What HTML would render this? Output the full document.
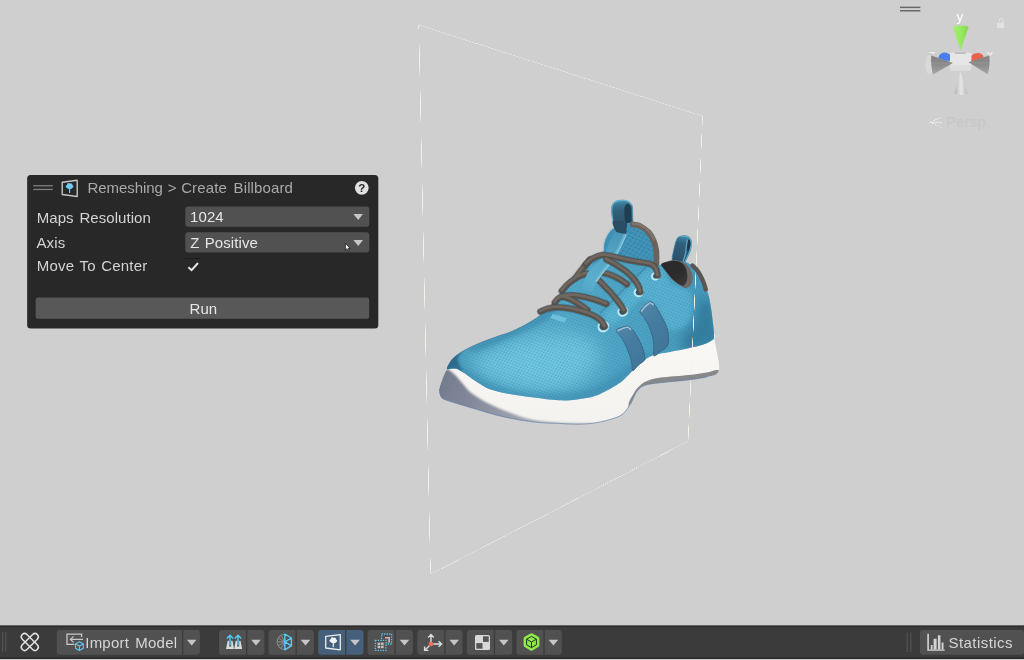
<!DOCTYPE html>
<html><head><meta charset="utf-8">
<style>
html,body{margin:0;padding:0;}
body{width:1024px;height:660px;overflow:hidden;background:#cfcfcf;font-family:"Liberation Sans",sans-serif;position:relative;}
#scene{position:absolute;left:0;top:0;width:1024px;height:660px;will-change:transform;}
#ui{position:absolute;left:0;top:0;width:1024px;height:660px;}
.t{position:absolute;font-size:15px;line-height:18px;white-space:nowrap;word-spacing:2px;letter-spacing:0.1px;}
#panel{position:absolute;left:27.1px;top:175.1px;width:351.2px;height:153.5px;background:#282828;border-radius:3.5px;}
.dd{position:absolute;left:185.2px;width:184.2px;height:20px;background:#515151;border-radius:3px;}
#run{position:absolute;left:35.6px;top:297.5px;width:333.6px;height:21.3px;background:#585858;border-radius:2.5px;}
#bar{position:absolute;left:0;top:625.6px;width:1024px;height:33.2px;background:#3b3b3b;border-top:1px solid #242424;border-bottom:1.1px solid #1c1c1c;box-sizing:border-box;}
</style></head><body>
<svg id="scene" width="1024" height="660" viewBox="0 0 1024 660">
<defs>
<linearGradient id="gUpper" gradientUnits="userSpaceOnUse" x1="450" y1="0" x2="715" y2="0">
<stop offset="0" stop-color="#4a9dbd"/><stop offset=".3" stop-color="#56accb"/><stop offset=".65" stop-color="#50a6c6"/><stop offset="1" stop-color="#4698ba"/></linearGradient>
<linearGradient id="gSole" gradientUnits="userSpaceOnUse" x1="0" y1="340" x2="0" y2="425">
<stop offset="0" stop-color="#faf8f5"/><stop offset="1" stop-color="#f4f2ee"/></linearGradient>
<linearGradient id="gWedge" gradientUnits="userSpaceOnUse" x1="440" y1="380" x2="560" y2="425"><stop offset="0" stop-color="#747b8d"/><stop offset=".3" stop-color="#848a9b"/><stop offset=".62" stop-color="#999eab"/><stop offset="1" stop-color="#b6b9c0"/></linearGradient>
<linearGradient id="gLoop" gradientUnits="userSpaceOnUse" x1="684" y1="235" x2="678" y2="262">
<stop offset="0" stop-color="#4c9bbd"/><stop offset=".14" stop-color="#3a7897"/><stop offset=".35" stop-color="#315e7a"/><stop offset="1" stop-color="#2b5068"/></linearGradient>
<linearGradient id="gLoop2" gradientUnits="userSpaceOnUse" x1="618" y1="200" x2="622" y2="236">
<stop offset="0" stop-color="#4b9abb"/><stop offset=".12" stop-color="#3b7896"/><stop offset=".3" stop-color="#325f7a"/><stop offset="1" stop-color="#294b62"/></linearGradient>
<linearGradient id="gOpen" gradientUnits="userSpaceOnUse" x1="662" y1="262" x2="688" y2="284"><stop offset="0" stop-color="#2a2a2a"/><stop offset=".6" stop-color="#2c2c2c"/><stop offset="1" stop-color="#3c3a39"/></linearGradient>
<linearGradient id="gRib" gradientUnits="userSpaceOnUse" x1="622" y1="232" x2="586" y2="292"><stop offset="0" stop-color="#4896b8"/><stop offset=".5" stop-color="#55a7c7"/><stop offset=".85" stop-color="#5aaecd"/><stop offset="1" stop-color="#5aaecd" stop-opacity="0.3"/></linearGradient>
<linearGradient id="gStripe" gradientUnits="userSpaceOnUse" x1="615" y1="310" x2="660" y2="360">
<stop offset="0" stop-color="#5f8fb0"/><stop offset=".5" stop-color="#457c9f"/><stop offset="1" stop-color="#3f7698"/></linearGradient>
<pattern id="mesh" width="4.4" height="3.6" patternUnits="userSpaceOnUse" patternTransform="rotate(-18)">
<circle cx="1.1" cy="0.9" r="0.9" fill="#2f7da3"/><circle cx="3.3" cy="2.7" r="0.9" fill="#2f7da3"/></pattern>
<pattern id="perf" width="6.2" height="5" patternUnits="userSpaceOnUse" patternTransform="rotate(-14)"><ellipse cx="1.6" cy="1.3" rx="1.5" ry="1.1" fill="#2f7598"/><ellipse cx="4.7" cy="3.8" rx="1.5" ry="1.1" fill="#2f7598"/></pattern>
<filter id="b05" x="-20%" y="-20%" width="140%" height="140%"><feGaussianBlur stdDeviation="0.6"/></filter>
<filter id="b1" x="-20%" y="-20%" width="140%" height="140%"><feGaussianBlur stdDeviation="0.8"/></filter>
<filter id="b2" x="-20%" y="-20%" width="140%" height="140%"><feGaussianBlur stdDeviation="1.2"/></filter>
<filter id="b3" x="-20%" y="-20%" width="140%" height="140%"><feGaussianBlur stdDeviation="2.2"/></filter>
<filter id="b4" x="-20%" y="-20%" width="140%" height="140%"><feGaussianBlur stdDeviation="3"/></filter>
<filter id="b6" x="-30%" y="-30%" width="160%" height="160%"><feGaussianBlur stdDeviation="5"/></filter>
<filter id="b8" x="-30%" y="-30%" width="160%" height="160%"><feGaussianBlur stdDeviation="9"/></filter>
<clipPath id="cUpper"><path d="M447.3 369.0C446.6 368.3 447.7 366.4 448.8 364.5C449.9 362.6 451.3 359.9 454.0 357.5C456.7 355.1 460.7 352.4 465.0 350.0C469.3 347.6 474.7 345.1 480.0 342.9C485.3 340.7 491.8 338.5 497.0 336.6C502.2 334.8 506.3 333.7 511.0 331.8C515.7 329.9 520.5 327.5 525.0 325.0C529.5 322.5 534.5 319.5 538.0 317.0C541.5 314.5 543.2 312.7 546.0 310.0C548.8 307.3 552.3 304.2 555.0 301.0C557.7 297.8 558.7 294.8 562.0 291.0C565.3 287.2 571.2 282.7 575.0 278.5C578.8 274.3 582.0 269.3 584.5 266.0C587.0 262.7 587.9 260.4 590.0 258.6C592.1 256.8 594.8 256.1 597.0 255.0C599.2 253.9 602.2 254.1 603.4 252.3C604.6 250.5 603.6 246.7 604.3 244.0C604.9 241.3 605.8 238.6 607.3 236.0C608.8 233.4 611.0 230.3 613.5 228.5C616.0 226.7 618.9 226.0 622.0 225.0C625.1 224.0 629.0 222.7 632.0 222.6C635.0 222.5 637.0 223.0 640.0 224.3C643.0 225.6 647.4 227.9 650.0 230.5C652.6 233.1 654.5 236.8 655.8 240.0C657.1 243.2 657.5 246.2 658.0 250.0C658.5 253.8 658.1 260.2 658.6 262.7C659.1 265.2 659.6 264.9 661.0 264.8C662.4 264.7 664.9 262.7 667.0 262.0C669.1 261.3 671.2 260.6 673.7 260.5C676.2 260.4 679.4 261.2 681.8 261.6C684.2 262.0 685.7 261.9 688.0 263.0C690.3 264.1 693.2 265.8 695.5 268.0C697.8 270.2 699.8 273.2 701.5 276.5C703.2 279.8 704.8 284.1 706.0 287.5C707.2 290.9 708.1 293.2 709.0 297.0C709.9 300.8 710.6 305.5 711.3 310.0C712.0 314.5 712.5 319.7 713.0 324.0C713.5 328.3 714.1 333.3 714.0 336.0C713.9 338.7 714.3 338.6 712.5 340.0C710.7 341.4 707.3 343.2 703.3 344.6C699.3 346.0 693.9 347.1 688.4 348.3C682.9 349.5 675.6 350.9 670.0 352.0C664.4 353.1 659.3 353.4 655.0 354.8C650.7 356.2 647.7 357.8 644.0 360.4C640.3 363.0 636.2 367.4 632.8 370.6C629.4 373.9 626.6 377.3 623.5 379.9C620.4 382.5 618.8 383.8 614.2 386.4C609.6 389.0 601.9 393.5 595.7 395.7C589.5 397.9 583.2 398.6 577.0 399.4C570.8 400.2 565.8 400.6 558.6 400.3C551.4 400.0 542.4 398.7 534.0 397.6C525.6 396.5 515.7 395.2 508.2 393.8C500.7 392.4 494.1 390.7 489.1 388.9C484.2 387.1 482.0 385.3 478.5 383.1C475.0 380.9 471.2 377.9 467.9 375.7C464.5 373.4 460.9 370.8 458.4 369.6C455.9 368.4 454.9 368.7 453.0 368.6C451.1 368.5 448.0 369.7 447.3 369.0Z"/></clipPath>
<clipPath id="cSole"><path d="M446.5 370.2C444.4 373.4 443.5 376.3 442.3 379.4C441.1 382.5 439.7 386.3 439.4 388.9C439.1 391.5 439.6 393.3 440.3 395.0C441.0 396.7 441.0 397.7 443.5 399.0C446.0 400.3 449.7 401.2 455.2 402.9C460.7 404.6 469.3 407.2 476.4 409.3C483.5 411.4 490.5 413.6 497.6 415.4C504.7 417.1 511.7 418.6 518.8 419.8C525.9 421.0 533.4 422.0 540.0 422.6C546.6 423.2 552.4 423.1 558.6 423.4C564.8 423.7 570.8 424.3 577.0 424.2C583.2 424.1 589.5 423.8 595.7 422.8C601.9 421.8 609.6 419.8 614.2 418.2C618.8 416.6 620.7 415.8 623.5 413.3C626.3 410.8 628.8 406.6 631.0 403.0C633.2 399.4 634.3 394.9 636.5 392.0C638.7 389.1 640.0 387.1 644.0 385.5C648.0 383.9 653.2 383.6 660.6 382.7C668.0 381.8 680.7 380.8 688.4 379.9C696.1 378.9 702.4 377.9 707.0 377.0C711.6 376.1 714.3 375.8 716.3 374.3C718.3 372.8 719.0 371.1 719.2 367.8C719.4 364.6 718.2 359.4 717.4 354.8C716.6 350.2 715.2 343.5 714.6 340.0C714.0 336.5 716.2 335.7 713.8 334.0C711.4 332.3 712.3 327.3 700.0 330.0C687.7 332.7 656.7 343.3 640.0 350.0C623.3 356.7 616.7 364.2 600.0 370.0C583.3 375.8 560.0 385.0 540.0 385.0C520.0 385.0 494.2 374.2 480.0 370.0C465.8 365.8 460.6 360.0 455.0 360.0C449.4 360.0 448.6 367.0 446.5 370.2Z"/></clipPath>
</defs>
<g id="shoe">
<path d="M672.3 260.5C671.6 258.6 672.9 254.0 673.6 250.5C674.4 247.0 675.6 241.7 676.8 239.3C677.9 236.9 679.1 236.9 680.5 236.3C681.9 235.7 683.5 235.5 685.0 235.7C686.5 235.9 688.4 236.4 689.5 237.5C690.6 238.6 691.2 240.2 691.4 242.3C691.6 244.4 691.3 247.2 690.5 250.0C689.7 252.8 687.6 256.8 686.5 259.0C685.4 261.2 685.4 262.5 684.0 263.0C682.6 263.5 680.0 262.4 678.0 262.0C676.0 261.6 673.0 262.4 672.3 260.5Z" fill="url(#gLoop)" stroke="#3f85a6" stroke-width="0.8"/>
<path d="M686.6 251.0C686.2 250.1 686.5 246.7 686.6 245.0C686.7 243.3 686.8 241.9 687.2 241.0C687.6 240.1 688.3 239.4 688.8 239.4C689.3 239.4 690.1 240.0 690.4 241.0C690.7 242.0 690.7 243.9 690.4 245.5C690.1 247.1 689.4 249.6 688.8 250.5C688.2 251.4 687.0 251.9 686.6 251.0Z" fill="#1d3a4c"/>
<path d="M687.4 239.6C687.2 240.7 686.7 243.9 686.4 246.0C686.1 248.1 686.1 250.1 685.8 252.0C685.5 253.9 684.9 255.9 684.4 257.5C683.9 259.1 683.2 260.9 683.0 261.6" fill="none" stroke="#62b6d6" stroke-width="1.2" opacity=".9"/>
<path d="M684.5 262.0C685.2 260.7 687.4 256.7 688.5 254.0C689.6 251.3 690.6 248.2 691.0 246.0C691.4 243.8 691.3 242.1 690.6 240.5C689.9 238.9 688.6 237.3 687.0 236.6C685.4 235.9 682.0 236.3 681.0 236.2" fill="none" stroke="#6cc0de" stroke-width="1" opacity=".8"/>
<path d="M446.5 370.2C444.4 373.4 443.5 376.3 442.3 379.4C441.1 382.5 439.7 386.3 439.4 388.9C439.1 391.5 439.6 393.3 440.3 395.0C441.0 396.7 441.0 397.7 443.5 399.0C446.0 400.3 449.7 401.2 455.2 402.9C460.7 404.6 469.3 407.2 476.4 409.3C483.5 411.4 490.5 413.6 497.6 415.4C504.7 417.1 511.7 418.6 518.8 419.8C525.9 421.0 533.4 422.0 540.0 422.6C546.6 423.2 552.4 423.1 558.6 423.4C564.8 423.7 570.8 424.3 577.0 424.2C583.2 424.1 589.5 423.8 595.7 422.8C601.9 421.8 609.6 419.8 614.2 418.2C618.8 416.6 620.7 415.8 623.5 413.3C626.3 410.8 628.8 406.6 631.0 403.0C633.2 399.4 634.3 394.9 636.5 392.0C638.7 389.1 640.0 387.1 644.0 385.5C648.0 383.9 653.2 383.6 660.6 382.7C668.0 381.8 680.7 380.8 688.4 379.9C696.1 378.9 702.4 377.9 707.0 377.0C711.6 376.1 714.3 375.8 716.3 374.3C718.3 372.8 719.0 371.1 719.2 367.8C719.4 364.6 718.2 359.4 717.4 354.8C716.6 350.2 715.2 343.5 714.6 340.0C714.0 336.5 716.2 335.7 713.8 334.0C711.4 332.3 712.3 327.3 700.0 330.0C687.7 332.7 656.7 343.3 640.0 350.0C623.3 356.7 616.7 364.2 600.0 370.0C583.3 375.8 560.0 385.0 540.0 385.0C520.0 385.0 494.2 374.2 480.0 370.0C465.8 365.8 460.6 360.0 455.0 360.0C449.4 360.0 448.6 367.0 446.5 370.2Z" fill="url(#gSole)"/>
<g clip-path="url(#cSole)">
<path d="M447.0 369.0C448.6 369.4 448.1 369.2 449.5 370.2C450.9 371.2 453.0 372.9 455.2 375.1C457.4 377.3 460.3 381.0 462.6 383.6C464.9 386.2 466.2 388.5 469.0 391.0C471.8 393.5 476.2 396.4 479.6 398.5C483.0 400.6 485.2 401.9 489.1 403.8C493.0 405.7 497.9 408.1 502.9 410.1C507.8 412.1 513.6 414.4 518.8 416.0C524.0 417.6 527.5 418.8 534.0 419.9C540.5 421.0 549.0 421.9 558.0 422.5C567.0 423.1 581.0 423.0 588.0 423.6C595.0 424.2 608.0 425.3 600.0 426.0C592.0 426.7 556.7 428.7 540.0 428.0C523.3 427.3 514.2 425.3 500.0 422.0C485.8 418.7 466.0 411.7 455.0 408.0C444.0 404.3 437.5 403.8 434.0 400.0C430.5 396.2 433.0 390.3 434.0 385.0C435.0 379.7 437.8 370.7 440.0 368.0C442.2 365.3 445.4 368.6 447.0 369.0Z" fill="url(#gWedge)" filter="url(#b1)"/>
<path d="M628.5 405.0C628.5 401.2 632.2 396.2 634.0 393.0C635.8 389.8 637.3 388.0 639.5 386.0C641.7 384.0 643.5 382.4 647.0 381.0C650.5 379.6 653.7 378.6 660.6 377.6C667.5 376.6 680.7 375.9 688.4 375.0C696.1 374.1 702.3 373.2 707.0 372.4C711.7 371.6 714.0 370.1 716.5 370.0C719.0 369.9 721.1 370.0 722.0 372.0C722.9 374.0 727.3 379.7 722.0 382.0C716.7 384.3 702.0 384.7 690.0 386.0C678.0 387.3 659.3 385.0 650.0 390.0C640.7 395.0 637.6 413.5 634.0 416.0C630.4 418.5 628.5 408.8 628.5 405.0Z" fill="#88888b" filter="url(#b05)"/>
</g>
<path d="M439.4 388.9C439.5 389.9 439.6 393.3 440.3 395.0C441.0 396.7 441.0 397.7 443.5 399.0C446.0 400.3 449.7 401.2 455.2 402.9C460.7 404.6 469.3 407.2 476.4 409.3C483.5 411.4 490.5 413.6 497.6 415.4C504.7 417.1 511.7 418.6 518.8 419.8C525.9 421.0 533.4 422.0 540.0 422.6C546.6 423.2 552.4 423.1 558.6 423.4C564.8 423.7 570.8 424.3 577.0 424.2C583.2 424.1 589.5 423.8 595.7 422.8C601.9 421.8 609.6 419.8 614.2 418.2C618.8 416.6 620.7 415.8 623.5 413.3C626.3 410.8 628.8 406.6 631.0 403.0C633.2 399.4 634.3 394.9 636.5 392.0C638.7 389.1 640.0 387.1 644.0 385.5C648.0 383.9 653.2 383.6 660.6 382.7C668.0 381.8 680.7 380.8 688.4 379.9C696.1 378.9 703.9 377.5 707.0 377.0" fill="none" stroke="#5d7ea6" stroke-width="1" opacity=".7"/>
<path d="M616.5 231.0C614.4 229.7 614.1 225.2 613.3 222.0C612.5 218.8 611.7 214.8 611.5 212.0C611.3 209.2 611.5 206.8 612.3 205.0C613.0 203.2 614.3 202.1 616.0 201.3C617.7 200.5 620.4 200.2 622.5 200.2C624.6 200.2 626.9 200.6 628.5 201.5C630.1 202.4 631.3 203.6 632.0 205.5C632.7 207.4 632.6 209.5 632.6 213.0C632.6 216.5 633.4 223.7 632.3 226.5C631.2 229.3 628.6 229.2 626.0 230.0C623.4 230.8 618.6 232.3 616.5 231.0Z" fill="url(#gLoop2)" stroke="#4a93b4" stroke-width="0.8"/>
<path d="M627.5 227.0C626.5 225.7 625.3 221.8 624.8 219.0C624.3 216.2 624.2 212.3 624.3 210.0C624.4 207.7 625.0 206.0 625.6 205.0C626.2 204.0 627.4 203.7 628.2 203.9C629.0 204.2 630.1 204.7 630.6 206.5C631.1 208.3 631.0 211.6 631.1 215.0C631.2 218.4 631.6 225.0 631.0 227.0C630.4 229.0 628.5 228.3 627.5 227.0Z" fill="#1f3d50"/>
<path d="M613.0 222.0C612.8 220.3 611.9 214.8 611.8 212.0C611.7 209.2 611.9 206.8 612.6 205.0C613.3 203.2 614.4 202.2 616.0 201.4C617.6 200.6 620.4 200.4 622.5 200.4C624.6 200.4 626.9 200.8 628.5 201.7C630.1 202.5 631.4 204.9 632.0 205.5" fill="none" stroke="#67b8d6" stroke-width="1.1" opacity=".85"/>
<path id="upperPath" d="M447.3 369.0C446.6 368.3 447.7 366.4 448.8 364.5C449.9 362.6 451.3 359.9 454.0 357.5C456.7 355.1 460.7 352.4 465.0 350.0C469.3 347.6 474.7 345.1 480.0 342.9C485.3 340.7 491.8 338.5 497.0 336.6C502.2 334.8 506.3 333.7 511.0 331.8C515.7 329.9 520.5 327.5 525.0 325.0C529.5 322.5 534.5 319.5 538.0 317.0C541.5 314.5 543.2 312.7 546.0 310.0C548.8 307.3 552.3 304.2 555.0 301.0C557.7 297.8 558.7 294.8 562.0 291.0C565.3 287.2 571.2 282.7 575.0 278.5C578.8 274.3 582.0 269.3 584.5 266.0C587.0 262.7 587.9 260.4 590.0 258.6C592.1 256.8 594.8 256.1 597.0 255.0C599.2 253.9 602.2 254.1 603.4 252.3C604.6 250.5 603.6 246.7 604.3 244.0C604.9 241.3 605.8 238.6 607.3 236.0C608.8 233.4 611.0 230.3 613.5 228.5C616.0 226.7 618.9 226.0 622.0 225.0C625.1 224.0 629.0 222.7 632.0 222.6C635.0 222.5 637.0 223.0 640.0 224.3C643.0 225.6 647.4 227.9 650.0 230.5C652.6 233.1 654.5 236.8 655.8 240.0C657.1 243.2 657.5 246.2 658.0 250.0C658.5 253.8 658.1 260.2 658.6 262.7C659.1 265.2 659.6 264.9 661.0 264.8C662.4 264.7 664.9 262.7 667.0 262.0C669.1 261.3 671.2 260.6 673.7 260.5C676.2 260.4 679.4 261.2 681.8 261.6C684.2 262.0 685.7 261.9 688.0 263.0C690.3 264.1 693.2 265.8 695.5 268.0C697.8 270.2 699.8 273.2 701.5 276.5C703.2 279.8 704.8 284.1 706.0 287.5C707.2 290.9 708.1 293.2 709.0 297.0C709.9 300.8 710.6 305.5 711.3 310.0C712.0 314.5 712.5 319.7 713.0 324.0C713.5 328.3 714.1 333.3 714.0 336.0C713.9 338.7 714.3 338.6 712.5 340.0C710.7 341.4 707.3 343.2 703.3 344.6C699.3 346.0 693.9 347.1 688.4 348.3C682.9 349.5 675.6 350.9 670.0 352.0C664.4 353.1 659.3 353.4 655.0 354.8C650.7 356.2 647.7 357.8 644.0 360.4C640.3 363.0 636.2 367.4 632.8 370.6C629.4 373.9 626.6 377.3 623.5 379.9C620.4 382.5 618.8 383.8 614.2 386.4C609.6 389.0 601.9 393.5 595.7 395.7C589.5 397.9 583.2 398.6 577.0 399.4C570.8 400.2 565.8 400.6 558.6 400.3C551.4 400.0 542.4 398.7 534.0 397.6C525.6 396.5 515.7 395.2 508.2 393.8C500.7 392.4 494.1 390.7 489.1 388.9C484.2 387.1 482.0 385.3 478.5 383.1C475.0 380.9 471.2 377.9 467.9 375.7C464.5 373.4 460.9 370.8 458.4 369.6C455.9 368.4 454.9 368.7 453.0 368.6C451.1 368.5 448.0 369.7 447.3 369.0Z" fill="url(#gUpper)"/>
<path d="M447.3 369.0C447.6 368.2 447.7 366.4 448.8 364.5C449.9 362.6 451.3 359.9 454.0 357.5C456.7 355.1 460.7 352.4 465.0 350.0C469.3 347.6 474.7 345.1 480.0 342.9C485.3 340.7 491.8 338.5 497.0 336.6C502.2 334.8 506.3 333.7 511.0 331.8C515.7 329.9 520.5 327.5 525.0 325.0C529.5 322.5 534.5 319.5 538.0 317.0C541.5 314.5 543.2 312.7 546.0 310.0C548.8 307.3 552.3 304.2 555.0 301.0C557.7 297.8 558.7 294.8 562.0 291.0C565.3 287.2 571.2 282.7 575.0 278.5C578.8 274.3 582.0 269.3 584.5 266.0C587.0 262.7 587.9 260.4 590.0 258.6C592.1 256.8 594.8 256.1 597.0 255.0C599.2 253.9 602.3 252.8 603.4 252.3" fill="none" stroke="#3b6c8a" stroke-width="1" opacity=".6"/>
<g clip-path="url(#cUpper)">
<path d="M470.0 360.0C472.5 354.5 488.3 349.2 500.0 345.0C511.7 340.8 526.7 336.7 540.0 335.0C553.3 333.3 570.0 332.5 580.0 335.0C590.0 337.5 598.3 343.3 600.0 350.0C601.7 356.7 596.7 368.3 590.0 375.0C583.3 381.7 571.7 387.8 560.0 390.0C548.3 392.2 532.5 390.0 520.0 388.0C507.5 386.0 493.3 382.7 485.0 378.0C476.7 373.3 467.5 365.5 470.0 360.0Z" fill="#7ad2e8" opacity=".75" filter="url(#b8)"/>
<path d="M700.0 300.0C702.3 298.8 709.3 298.3 712.0 305.0C714.7 311.7 718.0 333.0 716.0 340.0C714.0 347.0 705.3 345.3 700.0 347.0C694.7 348.7 687.0 351.5 684.0 350.0C681.0 348.5 680.7 342.0 682.0 338.0C683.3 334.0 689.3 330.3 692.0 326.0C694.7 321.7 696.7 316.3 698.0 312.0C699.3 307.7 697.7 301.2 700.0 300.0Z" fill="#2f7394" opacity=".75" filter="url(#b6)"/>
<path d="M440.0 372.0C439.0 370.5 443.7 365.0 446.0 362.0C448.3 359.0 451.3 356.0 454.0 354.0C456.7 352.0 461.3 349.3 462.0 350.0C462.7 350.7 458.5 355.7 458.0 358.0C457.5 360.3 458.3 361.8 459.0 364.0C459.7 366.2 463.2 369.8 462.0 371.0C460.8 372.2 455.7 370.8 452.0 371.0C448.3 371.2 441.0 373.5 440.0 372.0Z" fill="#2c6482" opacity=".9" filter="url(#b2)"/>
<path d="M470.0 346.0C474.0 343.2 488.3 339.2 500.0 334.0C511.7 328.8 531.7 319.8 540.0 315.0C548.3 310.2 547.3 305.8 550.0 305.0C552.7 304.2 557.7 306.8 556.0 310.0C554.3 313.2 548.5 319.0 540.0 324.0C531.5 329.0 515.7 335.5 505.0 340.0C494.3 344.5 481.8 350.0 476.0 351.0C470.2 352.0 466.0 348.8 470.0 346.0Z" fill="#3a86aa" opacity=".6" filter="url(#b3)"/>
<path d="M447.0 369.0C446.7 370.3 454.5 372.8 460.0 376.0C465.5 379.2 471.7 384.3 480.0 388.0C488.3 391.7 499.2 395.7 510.0 398.0C520.8 400.3 533.3 401.5 545.0 402.0C556.7 402.5 570.8 402.0 580.0 401.0C589.2 400.0 593.3 398.8 600.0 396.0C606.7 393.2 613.3 389.0 620.0 384.0C626.7 379.0 633.3 370.8 640.0 366.0C646.7 361.2 660.0 356.3 660.0 355.0C660.0 353.7 646.7 355.2 640.0 358.0C633.3 360.8 627.0 367.3 620.0 372.0C613.0 376.7 605.5 382.7 598.0 386.0C590.5 389.3 583.8 390.8 575.0 392.0C566.2 393.2 555.5 393.3 545.0 393.0C534.5 392.7 522.2 392.2 512.0 390.0C501.8 387.8 492.3 383.7 484.0 380.0C475.7 376.3 468.2 369.8 462.0 368.0C455.8 366.2 447.3 367.7 447.0 369.0Z" fill="#3a86ab" opacity=".55" filter="url(#b4)"/>
<path d="M604.0 252.0C602.8 249.3 603.7 243.8 605.0 240.0C606.3 236.2 609.2 231.5 612.0 229.0C614.8 226.5 618.7 226.0 622.0 225.0C625.3 224.0 628.2 222.2 632.0 223.0C635.8 223.8 641.7 226.3 645.0 230.0C648.3 233.7 650.8 239.7 652.0 245.0C653.2 250.3 655.7 259.5 652.0 262.0C648.3 264.5 636.7 261.0 630.0 260.0C623.3 259.0 616.3 257.3 612.0 256.0C607.7 254.7 605.2 254.7 604.0 252.0Z" fill="#3f93ba" opacity=".7" filter="url(#b2)"/>
<path d="M628.0 226.0C630.5 224.3 636.3 224.8 640.0 226.0C643.7 227.2 647.7 229.8 650.0 233.0C652.3 236.2 653.2 240.2 654.0 245.0C654.8 249.8 657.3 259.3 655.0 262.0C652.7 264.7 645.5 261.7 640.0 261.0C634.5 260.3 626.3 258.8 622.0 258.0C617.7 257.2 614.3 258.0 614.0 256.0C613.7 254.0 618.2 249.3 620.0 246.0C621.8 242.7 623.7 239.3 625.0 236.0C626.3 232.7 625.5 227.7 628.0 226.0Z" fill="url(#perf)" opacity=".55"/>
<path d="M650.0 268.0C654.3 266.0 658.3 265.3 662.0 268.0C665.7 270.7 667.3 280.0 672.0 284.0C676.7 288.0 687.0 286.0 690.0 292.0C693.0 298.0 693.3 313.7 690.0 320.0C686.7 326.3 675.8 332.5 670.0 330.0C664.2 327.5 660.0 310.0 655.0 305.0C650.0 300.0 645.0 298.3 640.0 300.0C635.0 301.7 629.7 310.8 625.0 315.0C620.3 319.2 615.5 324.8 612.0 325.0C608.5 325.2 602.7 320.5 604.0 316.0C605.3 311.5 614.7 304.0 620.0 298.0C625.3 292.0 631.0 285.0 636.0 280.0C641.0 275.0 645.7 270.0 650.0 268.0Z" fill="#66c2e0" opacity=".55" filter="url(#b3)"/>
<rect x="430" y="190" width="300" height="240" fill="url(#mesh)" opacity=".38"/>
</g>
<path d="M613.4 221.0C611.4 221.9 613.5 225.7 614.0 227.5C614.5 229.3 615.5 230.6 616.5 232.0C617.5 233.4 618.5 235.7 620.0 236.2C621.5 236.7 624.3 236.2 625.4 235.0C626.5 233.8 626.5 231.2 626.6 229.0C626.7 226.8 628.2 223.3 626.0 222.0C623.8 220.7 615.4 220.1 613.4 221.0Z" fill="#2a4d64"/>
<path d="M613.5 229.0C612.4 228.7 609.0 233.3 607.5 236.0C606.0 238.7 605.2 242.2 604.5 245.0C603.8 247.8 604.6 251.0 603.5 253.0C602.4 255.0 600.2 255.5 598.0 257.0C595.8 258.5 589.7 261.2 590.0 262.0C590.3 262.8 597.0 264.0 600.0 262.0C603.0 260.0 605.7 254.0 608.0 250.0C610.3 246.0 613.1 241.5 614.0 238.0C614.9 234.5 614.6 229.3 613.5 229.0Z" fill="#3f8db2" opacity=".8" filter="url(#b1)"/>
<path d="M552.5 314L566.8 318.2L564.5 322.5L550.5 318Z" fill="#6fc0dc"/>
<path d="M648.6 264.0C647.2 265.5 643.4 269.5 640.0 273.0C636.6 276.5 632.0 281.0 628.0 285.0C624.0 289.0 619.7 293.3 616.0 297.0C612.3 300.7 608.7 304.3 606.0 307.0C603.3 309.7 601.0 312.0 600.0 313.0" fill="none" stroke="#3a82a6" stroke-width="1.2" opacity=".7"/>
<path d="M661.0 264.5C661.2 262.9 664.8 262.2 667.0 261.5C669.2 260.8 671.7 259.9 674.5 260.0C677.3 260.1 681.2 261.2 683.6 262.4C686.0 263.6 687.6 265.1 689.0 267.0C690.4 268.9 691.4 271.4 692.0 273.6C692.6 275.8 692.8 278.0 692.5 280.0C692.2 282.0 691.7 284.2 690.5 285.5C689.3 286.8 687.0 287.9 685.5 288.0C684.0 288.1 683.9 287.7 681.8 286.4C679.7 285.1 675.4 282.6 672.7 280.0C670.0 277.4 667.5 273.6 665.5 271.0C663.5 268.4 660.8 266.1 661.0 264.5Z" fill="#6c6764"/>
<path d="M661.4 264.6C661.6 263.1 664.8 262.6 667.0 262.0C669.2 261.4 672.2 260.7 674.5 260.8C676.8 260.9 679.2 261.4 681.0 262.4C682.8 263.4 684.3 265.1 685.3 267.0C686.3 268.9 686.9 271.4 687.2 273.6C687.5 275.8 687.4 278.1 687.0 280.0C686.6 281.9 685.5 283.9 684.6 284.8C683.7 285.7 683.8 286.5 681.8 285.6C679.8 284.7 675.6 281.8 672.9 279.4C670.2 277.0 667.7 273.5 665.8 271.0C663.9 268.5 661.2 266.1 661.4 264.6Z" fill="url(#gOpen)"/>
<path d="M692.5 265.5C693.2 266.2 695.7 268.3 697.0 270.0C698.3 271.7 699.3 273.5 700.4 275.5C701.5 277.5 702.5 279.7 703.4 282.0C704.3 284.3 705.4 288.2 705.8 289.5" fill="none" stroke="#595654" stroke-width="4.4" stroke-linecap="round"/>
<path d="M632.6 224.4C633.8 224.7 637.3 224.7 640.0 226.0C642.7 227.3 646.3 229.9 648.6 232.3C650.9 234.7 652.3 237.6 653.6 240.6C654.9 243.6 655.7 246.8 656.2 250.5C656.7 254.2 656.4 260.9 656.4 263.0" fill="none" stroke="#6a625b" stroke-width="5.8" stroke-linecap="round"/>
<path d="M633.1 223.5C634.3 223.8 637.8 223.8 640.5 225.1C643.2 226.4 646.8 229.0 649.1 231.4C651.4 233.8 653.3 238.3 654.1 239.7" fill="none" stroke="#867a70" stroke-width="2.4" stroke-linecap="round" opacity=".8"/>
<path d="M616.2 330.2C616.4 328.6 620.0 328.1 622.0 327.4C624.0 326.7 626.3 325.8 628.0 326.2C629.7 326.6 631.0 328.0 632.4 329.6C633.8 331.2 635.3 333.5 636.6 335.6C637.9 337.8 639.3 340.3 640.4 342.5C641.5 344.7 642.3 346.8 643.0 349.0C643.7 351.2 644.4 354.1 644.6 356.0C644.8 357.9 645.3 359.0 644.3 360.5C643.3 362.0 640.4 363.3 638.5 365.0C636.6 366.7 633.9 370.8 632.8 370.8C631.7 370.8 632.4 367.1 632.0 365.0C631.6 362.9 631.3 360.3 630.6 358.0C629.9 355.7 628.9 353.2 628.0 351.0C627.1 348.8 626.5 346.8 625.3 344.5C624.1 342.2 622.5 339.4 621.0 337.0C619.5 334.6 616.0 331.8 616.2 330.2Z" fill="url(#gStripe)" stroke="#35627f" stroke-width=".8"/>
<path d="M640.0 311.5C640.2 309.8 642.8 307.6 644.5 306.0C646.2 304.4 648.4 302.1 650.0 301.8C651.6 301.5 652.7 302.5 654.2 304.2C655.7 305.9 657.4 309.0 659.0 311.8C660.6 314.6 662.6 318.1 664.0 321.0C665.4 323.9 666.5 326.0 667.3 329.0C668.1 332.0 668.6 336.1 668.6 339.0C668.6 341.9 668.4 344.4 667.0 346.5C665.6 348.6 662.7 349.9 660.5 351.5C658.3 353.1 655.1 356.7 654.0 355.8C652.9 354.9 654.0 349.1 653.8 346.0C653.6 342.9 653.3 340.1 652.7 337.3C652.1 334.5 650.9 331.4 650.0 329.0C649.1 326.6 648.4 324.8 647.3 322.7C646.2 320.6 644.7 318.4 643.5 316.5C642.3 314.6 639.8 313.2 640.0 311.5Z" fill="url(#gStripe)" stroke="#35627f" stroke-width=".8"/>
<path d="M617.2 331.0C618.1 330.6 620.7 329.0 622.5 328.4C624.3 327.8 626.4 327.1 627.8 327.3C629.2 327.5 630.5 329.4 631.0 329.8" fill="none" stroke="#a9c3d6" stroke-width="1.6" opacity=".9"/>
<path d="M641.0 311.6C641.7 310.8 643.5 308.2 645.0 306.8C646.5 305.4 648.6 303.3 650.0 303.0C651.4 302.7 653.0 304.7 653.6 305.0" fill="none" stroke="#a9c3d6" stroke-width="1.6" opacity=".9"/>
<ellipse cx="603.4" cy="326.6" rx="5.0" ry="4.5" fill="#35566a" stroke="#bdeaf6" stroke-width="2.1" transform="rotate(-30 603.4 326.6)"/>
<ellipse cx="622.8" cy="311.5" rx="4.6" ry="4.1" fill="#35566a" stroke="#bdeaf6" stroke-width="2.1" transform="rotate(-30 622.8 311.5)"/>
<ellipse cx="638.8" cy="292.2" rx="4.2" ry="3.8" fill="#35566a" stroke="#bdeaf6" stroke-width="2.1" transform="rotate(-30 638.8 292.2)"/>
<ellipse cx="655.8" cy="276.0" rx="3.8" ry="3.4" fill="#35566a" stroke="#bdeaf6" stroke-width="2.1" transform="rotate(-30 655.8 276.0)"/>
<path d="M584.5 266.5C585.1 265.8 587.1 263.2 588.0 262.0C588.9 260.8 589.7 259.9 590.0 259.5" fill="none" stroke="#3a4a55" stroke-width="7.2" stroke-linecap="round" opacity=".4"/>
<path d="M575.0 278.6C575.8 277.6 577.9 274.6 579.5 272.5C581.1 270.4 583.7 267.1 584.5 266.0" fill="none" stroke="#3a4a55" stroke-width="7.2" stroke-linecap="round" opacity=".4"/>
<path d="M561.8 291.0C562.7 290.0 564.8 287.1 567.0 285.0C569.2 282.9 572.7 280.2 575.0 278.6C577.3 277.0 579.0 276.3 581.0 275.5C583.0 274.7 585.2 274.0 587.0 273.6C588.8 273.2 591.2 273.3 592.0 273.2" fill="none" stroke="#3a4a55" stroke-width="7.2" stroke-linecap="round" opacity=".4"/>
<path d="M601.5 272.8C602.6 273.0 605.8 273.4 608.0 274.0C610.2 274.6 612.3 275.6 614.5 276.6C616.7 277.6 619.0 278.7 621.0 280.0C623.0 281.3 625.8 283.6 626.8 284.3" fill="none" stroke="#3a4a55" stroke-width="7.2" stroke-linecap="round" opacity=".4"/>
<path d="M596.8 278.8C597.5 279.4 599.4 280.9 601.0 282.5C602.6 284.1 604.6 286.3 606.4 288.2C608.2 290.1 610.2 291.9 612.0 294.0C613.8 296.1 615.8 298.6 617.3 300.5C618.8 302.4 619.9 303.8 621.0 305.5C622.1 307.2 623.5 309.7 624.0 310.5" fill="none" stroke="#3a4a55" stroke-width="7.2" stroke-linecap="round" opacity=".4"/>
<path d="M554.8 302.5C555.3 301.9 556.7 299.8 558.0 298.8C559.3 297.8 560.2 297.0 562.7 296.4C565.2 295.8 569.4 295.3 573.0 295.4C576.6 295.5 580.7 296.2 584.5 297.0C588.3 297.8 592.4 298.8 596.0 300.0C599.6 301.2 604.7 303.3 606.4 304.0" fill="none" stroke="#3a4a55" stroke-width="7.2" stroke-linecap="round" opacity=".4"/>
<path d="M563.0 297.0C564.1 297.3 567.5 298.0 569.5 298.8C571.5 299.6 573.0 300.6 575.0 301.8C577.0 303.0 579.5 304.4 581.5 305.8C583.5 307.2 586.3 309.3 587.3 310.0" fill="none" stroke="#3a4a55" stroke-width="7.2" stroke-linecap="round" opacity=".4"/>
<path d="M584.5 266.5C585.1 265.8 587.1 263.2 588.0 262.0C588.9 260.8 589.7 259.9 590.0 259.5" fill="none" stroke="#57514c" stroke-width="5.7" stroke-linecap="round"/>
<path d="M575.0 278.6C575.8 277.6 577.9 274.6 579.5 272.5C581.1 270.4 583.7 267.1 584.5 266.0" fill="none" stroke="#57514c" stroke-width="5.7" stroke-linecap="round"/>
<path d="M561.8 291.0C562.7 290.0 564.8 287.1 567.0 285.0C569.2 282.9 572.7 280.2 575.0 278.6C577.3 277.0 579.0 276.3 581.0 275.5C583.0 274.7 585.2 274.0 587.0 273.6C588.8 273.2 591.2 273.3 592.0 273.2" fill="none" stroke="#57514c" stroke-width="5.7" stroke-linecap="round"/>
<path d="M601.5 272.8C602.6 273.0 605.8 273.4 608.0 274.0C610.2 274.6 612.3 275.6 614.5 276.6C616.7 277.6 619.0 278.7 621.0 280.0C623.0 281.3 625.8 283.6 626.8 284.3" fill="none" stroke="#57514c" stroke-width="5.7" stroke-linecap="round"/>
<path d="M596.8 278.8C597.5 279.4 599.4 280.9 601.0 282.5C602.6 284.1 604.6 286.3 606.4 288.2C608.2 290.1 610.2 291.9 612.0 294.0C613.8 296.1 615.8 298.6 617.3 300.5C618.8 302.4 619.9 303.8 621.0 305.5C622.1 307.2 623.5 309.7 624.0 310.5" fill="none" stroke="#57514c" stroke-width="5.7" stroke-linecap="round"/>
<path d="M554.8 302.5C555.3 301.9 556.7 299.8 558.0 298.8C559.3 297.8 560.2 297.0 562.7 296.4C565.2 295.8 569.4 295.3 573.0 295.4C576.6 295.5 580.7 296.2 584.5 297.0C588.3 297.8 592.4 298.8 596.0 300.0C599.6 301.2 604.7 303.3 606.4 304.0" fill="none" stroke="#57514c" stroke-width="5.7" stroke-linecap="round"/>
<path d="M563.0 297.0C564.1 297.3 567.5 298.0 569.5 298.8C571.5 299.6 573.0 300.6 575.0 301.8C577.0 303.0 579.5 304.4 581.5 305.8C583.5 307.2 586.3 309.3 587.3 310.0" fill="none" stroke="#57514c" stroke-width="5.7" stroke-linecap="round"/>
<path d="M584.5 266.5C585.1 265.8 587.1 263.2 588.0 262.0C588.9 260.8 589.7 259.9 590.0 259.5" fill="none" stroke="#6f6760" stroke-width="2.8" stroke-linecap="round" transform="translate(-0.3,-0.7)"/>
<path d="M575.0 278.6C575.8 277.6 577.9 274.6 579.5 272.5C581.1 270.4 583.7 267.1 584.5 266.0" fill="none" stroke="#6f6760" stroke-width="2.8" stroke-linecap="round" transform="translate(-0.3,-0.7)"/>
<path d="M561.8 291.0C562.7 290.0 564.8 287.1 567.0 285.0C569.2 282.9 572.7 280.2 575.0 278.6C577.3 277.0 579.0 276.3 581.0 275.5C583.0 274.7 585.2 274.0 587.0 273.6C588.8 273.2 591.2 273.3 592.0 273.2" fill="none" stroke="#6f6760" stroke-width="2.8" stroke-linecap="round" transform="translate(-0.3,-0.7)"/>
<path d="M601.5 272.8C602.6 273.0 605.8 273.4 608.0 274.0C610.2 274.6 612.3 275.6 614.5 276.6C616.7 277.6 619.0 278.7 621.0 280.0C623.0 281.3 625.8 283.6 626.8 284.3" fill="none" stroke="#6f6760" stroke-width="2.8" stroke-linecap="round" transform="translate(-0.3,-0.7)"/>
<path d="M596.8 278.8C597.5 279.4 599.4 280.9 601.0 282.5C602.6 284.1 604.6 286.3 606.4 288.2C608.2 290.1 610.2 291.9 612.0 294.0C613.8 296.1 615.8 298.6 617.3 300.5C618.8 302.4 619.9 303.8 621.0 305.5C622.1 307.2 623.5 309.7 624.0 310.5" fill="none" stroke="#6f6760" stroke-width="2.8" stroke-linecap="round" transform="translate(-0.3,-0.7)"/>
<path d="M554.8 302.5C555.3 301.9 556.7 299.8 558.0 298.8C559.3 297.8 560.2 297.0 562.7 296.4C565.2 295.8 569.4 295.3 573.0 295.4C576.6 295.5 580.7 296.2 584.5 297.0C588.3 297.8 592.4 298.8 596.0 300.0C599.6 301.2 604.7 303.3 606.4 304.0" fill="none" stroke="#6f6760" stroke-width="2.8" stroke-linecap="round" transform="translate(-0.3,-0.7)"/>
<path d="M563.0 297.0C564.1 297.3 567.5 298.0 569.5 298.8C571.5 299.6 573.0 300.6 575.0 301.8C577.0 303.0 579.5 304.4 581.5 305.8C583.5 307.2 586.3 309.3 587.3 310.0" fill="none" stroke="#6f6760" stroke-width="2.8" stroke-linecap="round" transform="translate(-0.3,-0.7)"/>
<path d="M614.5 231.8C613.8 233.3 611.4 238.1 610.0 241.0C608.6 243.9 607.5 247.1 606.4 249.5C605.3 251.9 604.9 253.2 603.2 255.5C601.5 257.8 598.4 260.9 596.0 263.5C593.6 266.1 590.5 268.6 588.6 271.4C586.7 274.1 585.7 276.9 584.5 280.0C583.3 283.1 582.0 288.3 581.5 290.0L592.5 292.0C593.2 290.3 595.2 285.1 597.0 282.0C598.8 278.9 601.0 276.2 603.0 273.5C605.0 270.8 607.0 268.6 609.0 266.0C611.0 263.4 613.2 260.8 615.0 258.0C616.8 255.2 618.6 252.2 620.0 249.5C621.4 246.8 622.4 244.5 623.5 242.0C624.6 239.5 626.2 235.8 626.8 234.5Z" fill="url(#gRib)"/>
<path d="M625.2 233.9C624.6 235.2 623.0 238.9 621.9 241.4C620.8 243.9 619.8 246.2 618.4 248.9C617.0 251.6 615.2 254.6 613.4 257.4C611.6 260.1 609.4 262.8 607.4 265.4C605.4 268.0 603.4 270.2 601.4 272.9C599.4 275.6 596.4 280.0 595.4 281.4" fill="none" stroke="#7cc2dc" stroke-width="2.6" opacity=".55"/>
<path d="M626.3 234.3C625.8 235.6 624.1 239.3 623.0 241.8C621.9 244.3 620.9 246.6 619.5 249.3C618.1 252.0 616.3 255.1 614.5 257.8C612.7 260.6 610.5 263.2 608.5 265.8C606.5 268.4 604.5 270.6 602.5 273.3C600.5 276.0 597.5 280.4 596.5 281.8" fill="none" stroke="#a8deee" stroke-width="1" opacity=".75"/>
<path d="M606.4 259.5C607.7 260.2 611.3 261.9 614.0 263.5C616.7 265.1 620.1 267.2 622.7 269.0C625.3 270.8 627.5 272.6 629.5 274.5C631.5 276.4 633.5 278.6 635.0 280.5C636.5 282.4 637.6 284.1 638.5 286.0C639.4 287.9 640.2 291.0 640.6 292.0" fill="none" stroke="#3a4a55" stroke-width="7.2" stroke-linecap="round" opacity=".4"/>
<path d="M540.4 311.6C541.7 311.1 545.2 309.3 548.0 308.6C550.8 307.9 553.8 307.3 557.3 307.3C560.8 307.3 564.9 307.7 569.0 308.4C573.1 309.1 578.1 310.4 581.8 311.4C585.5 312.4 588.3 313.3 591.0 314.5C593.7 315.7 596.3 317.1 598.2 318.4C600.1 319.7 601.4 321.1 602.5 322.5C603.6 323.9 604.4 325.9 604.8 326.6" fill="none" stroke="#3a4a55" stroke-width="7.2" stroke-linecap="round" opacity=".4"/>
<path d="M586.0 264.0C587.1 263.1 589.9 260.1 592.5 258.6C595.1 257.1 598.2 255.6 601.5 255.2C604.8 254.8 607.9 255.5 612.0 256.3C616.1 257.1 621.3 258.8 626.0 259.8C630.7 260.8 635.9 261.5 640.0 262.2C644.1 262.9 647.9 263.1 650.5 264.2C653.1 265.2 654.6 266.6 655.8 268.5C657.0 270.4 657.5 274.3 657.8 275.5" fill="none" stroke="#3a4a55" stroke-width="7.2" stroke-linecap="round" opacity=".4"/>
<path d="M606.4 259.5C607.7 260.2 611.3 261.9 614.0 263.5C616.7 265.1 620.1 267.2 622.7 269.0C625.3 270.8 627.5 272.6 629.5 274.5C631.5 276.4 633.5 278.6 635.0 280.5C636.5 282.4 637.6 284.1 638.5 286.0C639.4 287.9 640.2 291.0 640.6 292.0" fill="none" stroke="#57514c" stroke-width="5.7" stroke-linecap="round"/>
<path d="M540.4 311.6C541.7 311.1 545.2 309.3 548.0 308.6C550.8 307.9 553.8 307.3 557.3 307.3C560.8 307.3 564.9 307.7 569.0 308.4C573.1 309.1 578.1 310.4 581.8 311.4C585.5 312.4 588.3 313.3 591.0 314.5C593.7 315.7 596.3 317.1 598.2 318.4C600.1 319.7 601.4 321.1 602.5 322.5C603.6 323.9 604.4 325.9 604.8 326.6" fill="none" stroke="#57514c" stroke-width="5.7" stroke-linecap="round"/>
<path d="M586.0 264.0C587.1 263.1 589.9 260.1 592.5 258.6C595.1 257.1 598.2 255.6 601.5 255.2C604.8 254.8 607.9 255.5 612.0 256.3C616.1 257.1 621.3 258.8 626.0 259.8C630.7 260.8 635.9 261.5 640.0 262.2C644.1 262.9 647.9 263.1 650.5 264.2C653.1 265.2 654.6 266.6 655.8 268.5C657.0 270.4 657.5 274.3 657.8 275.5" fill="none" stroke="#57514c" stroke-width="5.7" stroke-linecap="round"/>
<path d="M606.4 259.5C607.7 260.2 611.3 261.9 614.0 263.5C616.7 265.1 620.1 267.2 622.7 269.0C625.3 270.8 627.5 272.6 629.5 274.5C631.5 276.4 633.5 278.6 635.0 280.5C636.5 282.4 637.6 284.1 638.5 286.0C639.4 287.9 640.2 291.0 640.6 292.0" fill="none" stroke="#6f6760" stroke-width="2.8" stroke-linecap="round" transform="translate(-0.3,-0.7)"/>
<path d="M540.4 311.6C541.7 311.1 545.2 309.3 548.0 308.6C550.8 307.9 553.8 307.3 557.3 307.3C560.8 307.3 564.9 307.7 569.0 308.4C573.1 309.1 578.1 310.4 581.8 311.4C585.5 312.4 588.3 313.3 591.0 314.5C593.7 315.7 596.3 317.1 598.2 318.4C600.1 319.7 601.4 321.1 602.5 322.5C603.6 323.9 604.4 325.9 604.8 326.6" fill="none" stroke="#6f6760" stroke-width="2.8" stroke-linecap="round" transform="translate(-0.3,-0.7)"/>
<path d="M586.0 264.0C587.1 263.1 589.9 260.1 592.5 258.6C595.1 257.1 598.2 255.6 601.5 255.2C604.8 254.8 607.9 255.5 612.0 256.3C616.1 257.1 621.3 258.8 626.0 259.8C630.7 260.8 635.9 261.5 640.0 262.2C644.1 262.9 647.9 263.1 650.5 264.2C653.1 265.2 654.6 266.6 655.8 268.5C657.0 270.4 657.5 274.3 657.8 275.5" fill="none" stroke="#6f6760" stroke-width="2.8" stroke-linecap="round" transform="translate(-0.3,-0.7)"/>
</g>
<defs><linearGradient id="gDash" x1="0" y1="0" x2="0" y2="1"><stop offset="0" stop-color="#f5f3ea" stop-opacity=".25"/><stop offset=".3" stop-color="#f5f3ea" stop-opacity=".95"/><stop offset=".7" stop-color="#f5f3ea" stop-opacity=".95"/><stop offset="1" stop-color="#f5f3ea" stop-opacity=".25"/></linearGradient><linearGradient id="gDash2" x1="0" y1="0" x2="0" y2="1"><stop offset="0" stop-color="#f5f3ea" stop-opacity=".9"/><stop offset="1" stop-color="#f5f3ea" stop-opacity=".4"/></linearGradient></defs>
<g id="frame" shape-rendering="crispEdges">
<rect x="418" y="25.0" width="1" height="3.8" fill="url(#gDash)"/>
<rect x="419" y="43.8" width="1" height="31.8" fill="url(#gDash)"/>
<rect x="420" y="90.5" width="1" height="31.8" fill="url(#gDash)"/>
<rect x="421" y="137.3" width="1" height="31.8" fill="url(#gDash)"/>
<rect x="422" y="184.1" width="1" height="31.8" fill="url(#gDash)"/>
<rect x="423" y="230.9" width="1" height="31.8" fill="url(#gDash)"/>
<rect x="424" y="277.6" width="1" height="31.8" fill="url(#gDash)"/>
<rect x="425" y="324.4" width="1" height="31.8" fill="url(#gDash)"/>
<rect x="426" y="371.2" width="1" height="31.8" fill="url(#gDash)"/>
<rect x="427" y="418.0" width="1" height="31.8" fill="url(#gDash)"/>
<rect x="428" y="464.8" width="1" height="31.8" fill="url(#gDash)"/>
<rect x="429" y="511.6" width="1" height="31.8" fill="url(#gDash)"/>
<rect x="430" y="558.3" width="1" height="16.1" fill="url(#gDash)"/>
<rect x="702" y="115.6" width="1" height="9.9" fill="url(#gDash2)"/>
<rect x="701" y="132.7" width="1" height="16.4" fill="url(#gDash)"/>
<rect x="700" y="157.7" width="1" height="16.4" fill="url(#gDash)"/>
<rect x="699" y="181.6" width="1" height="16.4" fill="url(#gDash)"/>
<rect x="698" y="206.0" width="1" height="16.4" fill="url(#gDash)"/>
<rect x="697" y="228.2" width="1" height="16.4" fill="url(#gDash)"/>
<rect x="696" y="250.3" width="1" height="16.4" fill="url(#gDash)"/>
<rect x="695" y="272.1" width="1" height="16.4" fill="url(#gDash)"/>
<rect x="694" y="293.8" width="1" height="16.4" fill="url(#gDash)"/>
<rect x="693" y="315.4" width="1" height="16.4" fill="url(#gDash)"/>
<rect x="692" y="337.0" width="1" height="16.4" fill="url(#gDash)"/>
<rect x="691" y="358.6" width="1" height="16.4" fill="url(#gDash)"/>
<rect x="690" y="380.0" width="1" height="16.4" fill="url(#gDash)"/>
<rect x="689" y="401.5" width="1" height="16.4" fill="url(#gDash)"/>
<rect x="688" y="423.6" width="1" height="16.4" fill="url(#gDash)"/>
<line x1="419.5" y1="25.3" x2="702.6" y2="115.9" stroke="#e5e4e0" stroke-width="1" stroke-dasharray="2 1.27"/>
<line x1="688.1" y1="441.3" x2="430.6" y2="574.4" stroke="#e5e4e0" stroke-width="1" stroke-dasharray="1.6 0.6"/>
</g>
<g id="gizmo">
<defs>
<linearGradient id="gG" x1="0" y1="0" x2="1" y2="0"><stop offset="0" stop-color="#a2f072"/><stop offset=".5" stop-color="#96ea62"/><stop offset="1" stop-color="#80d84c"/></linearGradient>
<linearGradient id="gC1" x1="0" y1="0" x2="0" y2="1"><stop offset="0" stop-color="#9a9a9a"/><stop offset=".5" stop-color="#8c8c8c"/><stop offset="1" stop-color="#a6a6a6"/></linearGradient>
<linearGradient id="gC2" x1="0" y1="0" x2="1" y2="0"><stop offset="0" stop-color="#b4b4b4"/><stop offset=".5" stop-color="#e6e6e6"/><stop offset="1" stop-color="#b8b8b8"/></linearGradient>
</defs>
<rect x="900" y="6.6" width="20.4" height="1.5" fill="#6a6a6a"/><rect x="900" y="10" width="20.4" height="1.5" fill="#6a6a6a"/>
<text x="956.6" y="20.6" font-family="Liberation Sans, sans-serif" font-size="13.5" fill="#ffffff">y</text>
<clipPath id="cz"><rect x="926" y="50" width="12" height="4.1"/></clipPath><text x="928.8" y="59.2" font-family="Liberation Sans, sans-serif" font-size="13" fill="#f4f4f4" clip-path="url(#cz)">z</text>
<clipPath id="cx"><rect x="984" y="50" width="12" height="5.5"/></clipPath><text x="986.8" y="59.3" font-family="Liberation Sans, sans-serif" font-size="13" fill="#f4f4f4" clip-path="url(#cx)">x</text>
<!-- lock -->
<rect x="997" y="22.7" width="7.2" height="5.4" fill="#e2e2e2"/>
<path d="M999.4 21.2V20.4a1.9 1.9 0 0 1 3.8 0V22.7" fill="none" stroke="#e2e2e2" stroke-width="1.1"/>
<!-- bottom cone -->
<path d="M960.3 71.5L954.2 93.5Q961 96.3 967.8 93.5Z" fill="url(#gC2)"/>
<!-- blue and red cones behind -->
<path d="M938.2 60.6Q938 53.4 943.5 52.4Q948 52.2 950.6 55.5L951 61Z" fill="#4a7df0"/>
<path d="M984.2 60.6Q984.4 53.8 978.6 53.1Q973.6 53 971.4 56L971 61Z" fill="#e8624c"/>
<!-- cube -->
<rect x="950" y="52.7" width="21.3" height="17.8" rx="1.5" fill="#e6e6e6"/>
<rect x="950" y="65" width="21.3" height="5.5" rx="1.5" fill="#dedede"/>
<rect x="955" y="52.7" width="10.6" height="1" fill="#a8a8a8"/>
<!-- left cone -->
<ellipse cx="929.4" cy="64.6" rx="4.2" ry="9.6" fill="#d9d9d9"/>
<path d="M931.2 55.6L952.8 62.9L933 74.4Q930.6 66 931.2 55.6Z" fill="url(#gC1)"/>
<path d="M931.2 55.6L952.8 62.9L931 61.5Z" fill="#7e7e7e" opacity=".6"/>
<!-- right cone -->
<path d="M989.2 55.6L968.6 62.2L987.6 74.2Q990.4 66 989.2 55.6Z" fill="url(#gC1)"/>
<path d="M989.2 55.6L968.6 62.2L989.6 61.6Z" fill="#7e7e7e" opacity=".6"/>
<!-- green cone -->
<path d="M953.1 27.4Q953.4 25.6 960.8 25.6Q968.2 25.6 968.5 27.4L960.3 50.2Z" fill="url(#gG)"/>
<!-- persp -->
<g stroke="#e9e9e9" stroke-width="1" fill="none"><path d="M940.9 117.1L930.2 122.4L941.8 127.6" stroke-dasharray="1.3 1.1" shape-rendering="crispEdges"/><path d="M930 122.4H942"/></g>
<text x="946.2" y="126.9" font-family="Liberation Sans, sans-serif" font-size="14.6" fill="#c8c8c8" stroke="#c8c8c8" stroke-width=".5" letter-spacing="0.35">Persp</text>
</g>
</svg>
<svg id="ui" width="1024" height="660" viewBox="0 0 1024 660">
<rect x="27.15" y="175.1" width="351.15" height="153.5" rx="3.5" fill="#282828"/>
<rect x="185.3" y="206.6" width="184" height="20.1" rx="3" fill="#515151"/>
<rect x="185.3" y="232.3" width="184" height="20.2" rx="3" fill="#515151"/>
<rect x="35.65" y="297.5" width="333.55" height="21.3" rx="2.5" fill="#585858"/>
<rect x="0" y="625.6" width="1024" height="33.2" fill="#3b3b3b"/>
<rect x="0" y="625.6" width="1024" height="1" fill="#242424"/>
<rect x="0" y="657.7" width="1024" height="1.1" fill="#1c1c1c"/>
<rect x="33.2" y="185.1" width="19.6" height="1.3" fill="#808080"/><rect x="33.2" y="188.8" width="19.6" height="1.3" fill="#808080"/>
<path d="M62.2 182.3L77.2 180.3V196.5L62.2 194.5Z" fill="none" stroke="#c4c4c4" stroke-width="1.4" stroke-linejoin="round"/>
<path d="M69.6 193.1V186.1" stroke="#6ccdf6" stroke-width="1.15" fill="none"/><g fill="#6ccdf6"><circle cx="67.4" cy="186.4" r="1.55"/><circle cx="68.7" cy="184.6" r="1.60"/><circle cx="70.8" cy="184.8" r="1.60"/><circle cx="71.9" cy="186.6" r="1.50"/><circle cx="69.8" cy="186.7" r="1.90"/><circle cx="68.6" cy="187.7" r="1.20"/><circle cx="70.9" cy="187.8" r="1.20"/></g>
<circle cx="361.8" cy="187.8" r="6.9" fill="#e0e0e0"/>
<text x="361.8" y="192.2" text-anchor="middle" font-family="Liberation Sans, sans-serif" font-weight="bold" font-size="11.5" fill="#282828">?</text>
<path d="M353.4 214.1h9.6l-4.8 5.8z" fill="#c6c6c6"/>
<path d="M353.4 240.1h9.6l-4.8 5.8z" fill="#c6c6c6"/>
<path d="M345.4 243.4V250.2l1.6-1.5l1 2.4l1.1-.5l-1-2.3h2.1z" fill="#f0f0f0" stroke="#151515" stroke-width=".7"/>
<rect x="185" y="258" width="16" height="1" fill="#1c1c1c"/>
<path d="M188.4 267.2L191.6 270.2L198 263" fill="none" stroke="#e8e8e8" stroke-width="1.9"/>
<rect x="2" y="632" width="1.2" height="19.5" fill="#535353"/><rect x="5.2" y="632" width="1.2" height="19.5" fill="#535353"/>
<rect x="906.6" y="632.5" width="1.2" height="19.5" fill="#535353"/><rect x="910.2" y="632.5" width="1.2" height="19.5" fill="#535353"/>
<g fill="none" stroke="#e2e2e2" stroke-width="1.5"><rect x="19.2" y="638.7" width="21.2" height="6.6" rx="3.3" transform="rotate(45 29.8 642)"/><rect x="19.2" y="638.7" width="21.2" height="6.6" rx="3.3" transform="rotate(-45 29.8 642)"/></g>
<path d="M59.80 630h122.20v24.7h-122.20a3 3 0 0 1-3-3v-18.7a3 3 0 0 1 3-3z" fill="#515151"/><path d="M183.30 630h13.60a3 3 0 0 1 3 3v18.7a3 3 0 0 1-3 3h-13.60z" fill="#515151"/>
<path d="M186.9 639.8h9.6l-4.8 5.8z" fill="#c6c6c6"/>
<path d="M222.00 630h24.00v24.7h-24.00a3 3 0 0 1-3-3v-18.7a3 3 0 0 1 3-3z" fill="#515151"/><path d="M247.30 630h14.10a3 3 0 0 1 3 3v18.7a3 3 0 0 1-3 3h-14.10z" fill="#515151"/>
<path d="M251.2 639.8h9.6l-4.8 5.8z" fill="#c6c6c6"/>
<path d="M271.50 630h24.00v24.7h-24.00a3 3 0 0 1-3-3v-18.7a3 3 0 0 1 3-3z" fill="#515151"/><path d="M296.80 630h14.10a3 3 0 0 1 3 3v18.7a3 3 0 0 1-3 3h-14.10z" fill="#515151"/>
<path d="M300.7 639.8h9.6l-4.8 5.8z" fill="#c6c6c6"/>
<path d="M321.10 630h24.00v24.7h-24.00a3 3 0 0 1-3-3v-18.7a3 3 0 0 1 3-3z" fill="#46607c"/><path d="M346.40 630h14.10a3 3 0 0 1 3 3v18.7a3 3 0 0 1-3 3h-14.10z" fill="#46607c"/>
<path d="M350.3 639.8h9.6l-4.8 5.8z" fill="#c6c6c6"/>
<path d="M370.50 630h24.00v24.7h-24.00a3 3 0 0 1-3-3v-18.7a3 3 0 0 1 3-3z" fill="#515151"/><path d="M395.80 630h14.10a3 3 0 0 1 3 3v18.7a3 3 0 0 1-3 3h-14.10z" fill="#515151"/>
<path d="M399.7 639.8h9.6l-4.8 5.8z" fill="#c6c6c6"/>
<path d="M420.20 630h24.00v24.7h-24.00a3 3 0 0 1-3-3v-18.7a3 3 0 0 1 3-3z" fill="#515151"/><path d="M445.50 630h14.10a3 3 0 0 1 3 3v18.7a3 3 0 0 1-3 3h-14.10z" fill="#515151"/>
<path d="M449.4 639.8h9.6l-4.8 5.8z" fill="#c6c6c6"/>
<path d="M469.80 630h24.00v24.7h-24.00a3 3 0 0 1-3-3v-18.7a3 3 0 0 1 3-3z" fill="#515151"/><path d="M495.10 630h14.10a3 3 0 0 1 3 3v18.7a3 3 0 0 1-3 3h-14.10z" fill="#515151"/>
<path d="M499.0 639.8h9.6l-4.8 5.8z" fill="#c6c6c6"/>
<path d="M519.40 630h24.00v24.7h-24.00a3 3 0 0 1-3-3v-18.7a3 3 0 0 1 3-3z" fill="#515151"/><path d="M544.70 630h14.10a3 3 0 0 1 3 3v18.7a3 3 0 0 1-3 3h-14.10z" fill="#515151"/>
<path d="M548.6 639.8h9.6l-4.8 5.8z" fill="#c6c6c6"/>
<rect x="920" y="630" width="104" height="24.7" rx="3" fill="#515151"/>
<path d="M81.6 637V634.2H67V644.4H74.5" fill="none" stroke="#c8c8c8" stroke-width="1.3"/>
<path d="M83 639.4H70.4M73.6 636.4L70.4 639.4L73.6 642.4" fill="none" stroke="#c8c8c8" stroke-width="1.3"/>
<g fill="#515151" stroke="#5ac8f5" stroke-width="1.1" stroke-linejoin="round"><path d="M79.4 641.7L83.3 643.9V648.2L79.4 650.4L75.5 648.2V643.9Z"/><path d="M75.5 643.9L79.4 646.1L83.3 643.9M79.4 646.1V650.4" fill="none"/></g>
<path d="M226 648.9L227.7 640.8H229v5.6h2.2v-5.6h1.3L234 648.9ZM234.2 648.9L235.7 640.8H237v5.6h2.2v-5.6h1.3L242.2 648.9Z" fill="#dadada"/>
<g fill="none" stroke="#5ac8f5" stroke-width="1.4"><path d="M230 645.6V635.2M226.8 638.6L230 635.2L233.2 638.6M238 645.6V635.2M234.8 638.6L238 635.2L241.2 638.6"/></g>
<g fill="none" stroke="#858585" stroke-width="1.1"><path d="M284.8 634.2A7.7 7.7 0 0 0 284.8 649.6"/><path d="M284.8 641.9L278.2 638M284.8 641.9L277.1 641.9M284.8 641.9L278.2 645.8M284.8 641.9L281 635.3M284.8 641.9L281 648.5"/></g>
<path d="M284.8 634V649.8L291.4 645.8V638ZM285 641.9L291.4 638M285 641.9L291.4 645.8" fill="none" stroke="#5ac8f5" stroke-width="1.4" stroke-linejoin="round"/>
<path d="M325.7 636.3L340.3 634.7V649.8L325.7 648Z" fill="none" stroke="#ececec" stroke-width="1.3" stroke-linejoin="round"/>
<path d="M333.3 647.2V640.3" stroke="#f2f2f2" stroke-width="1.15" fill="none"/><g fill="#f2f2f2"><circle cx="331.1" cy="640.6" r="1.55"/><circle cx="332.4" cy="638.8" r="1.60"/><circle cx="334.5" cy="639.0" r="1.60"/><circle cx="335.6" cy="640.8" r="1.50"/><circle cx="333.5" cy="640.9" r="1.90"/><circle cx="332.3" cy="641.9" r="1.20"/><circle cx="334.6" cy="642.0" r="1.20"/></g>
<rect x="381.6" y="634" width="10" height="10" fill="none" stroke="#5ac8f5" stroke-width="1.3" stroke-dasharray="1.3 1.2"/>
<rect x="385" y="637" width="5" height="5.6" fill="#b8b8b8"/><rect x="385" y="638.6" width="3.2" height="4" fill="#515151"/>
<rect x="375.3" y="640.3" width="10.6" height="10" fill="#515151" stroke="#5ac8f5" stroke-width="1.3" stroke-dasharray="1.3 1.2"/>
<rect x="377.6" y="642.6" width="6" height="5.6" fill="#c4c4c4"/><path d="M380.6 642.6V648.2M377.6 645.4H383.6" stroke="#515151" stroke-width=".8"/>
<g fill="none" stroke="#dcdcdc" stroke-width="1.4"><path d="M431 642V634.6M428.2 637.6L431 634.6L433.8 637.6M433.2 644H441.6M438.6 641.2L441.6 644L438.6 646.8M429.4 645.8L424.8 650.2M424.6 646.6V650.4H428.4"/></g>
<circle cx="431" cy="644" r="2.3" fill="#f0705e"/>
<rect x="475" y="635" width="15" height="15" rx="1.6" fill="#d8d8d8"/><rect x="483" y="636.3" width="5.7" height="5.6" fill="#555"/><rect x="476.3" y="643.1" width="6.2" height="5.6" fill="#555"/>
<path d="M531.5 635.2L537.4 638.6V645.3L531.5 648.7L525.6 645.3V638.6Z" fill="#8fe84c" stroke="#8fe84c" stroke-width="4" stroke-linejoin="round"/>
<path d="M531.5 636.4L536.4 639.2V644.8L531.5 647.6L526.6 644.8V639.2ZM526.6 639.2L531.5 642L536.4 639.2M531.5 642V647.6" fill="none" stroke="#263320" stroke-width="1" stroke-linejoin="round"/>
<path d="M927.3 633.8h1.6v15.6h15.8v1.3h-17.4z" fill="#d4d4d4"/>
<rect x="930.8" y="645" width="1.8" height="4.6" fill="#d4d4d4"/><rect x="933.6" y="638.8" width="3" height="10.8" fill="#d4d4d4"/><rect x="937.9" y="635.3" width="2.5" height="14.3" fill="#d4d4d4"/><rect x="941.6" y="642.5" width="1.9" height="7.1" fill="#d4d4d4"/>
</svg>
<div id="txt" style="position:absolute;left:0;top:0;width:1024px;height:660px;will-change:transform">
<div class="t" id="ttl" style="left:87.4px;top:179.2px;color:#a9a9a9;word-spacing:0"><span id="s1" style="letter-spacing:-0.05px">Remeshing</span> <span id="s2" style="margin:0 0.3px 0 0.6px">&gt;</span> <span id="s3" style="word-spacing:2.4px;letter-spacing:0.12px">Create Billboard</span></div>
<div class="t" style="left:36.7px;top:208.9px;color:#d4d4d4;word-spacing:1.6px;letter-spacing:0.06px">Maps Resolution</div>
<div class="t" style="left:190px;top:207.7px;color:#e6e6e6">1024</div>
<div class="t" style="left:36.5px;top:234px;color:#d4d4d4">Axis</div>
<div class="t" style="left:190.3px;top:233.6px;color:#e6e6e6;word-spacing:0.8px">Z Positive</div>
<div class="t" style="left:36.8px;top:257.2px;color:#d4d4d4;letter-spacing:0.22px;word-spacing:1px">Move To Center</div>
<div class="t" style="left:189.5px;top:299.8px;color:#e6e6e6">Run</div>
<div class="t" style="left:85.3px;top:634px;color:#d6d6d6;letter-spacing:0.2px">Import Model</div>
<div class="t" style="left:948.6px;top:633.6px;color:#d6d6d6;letter-spacing:.42px">Statistics</div>
</div>
</body></html>
